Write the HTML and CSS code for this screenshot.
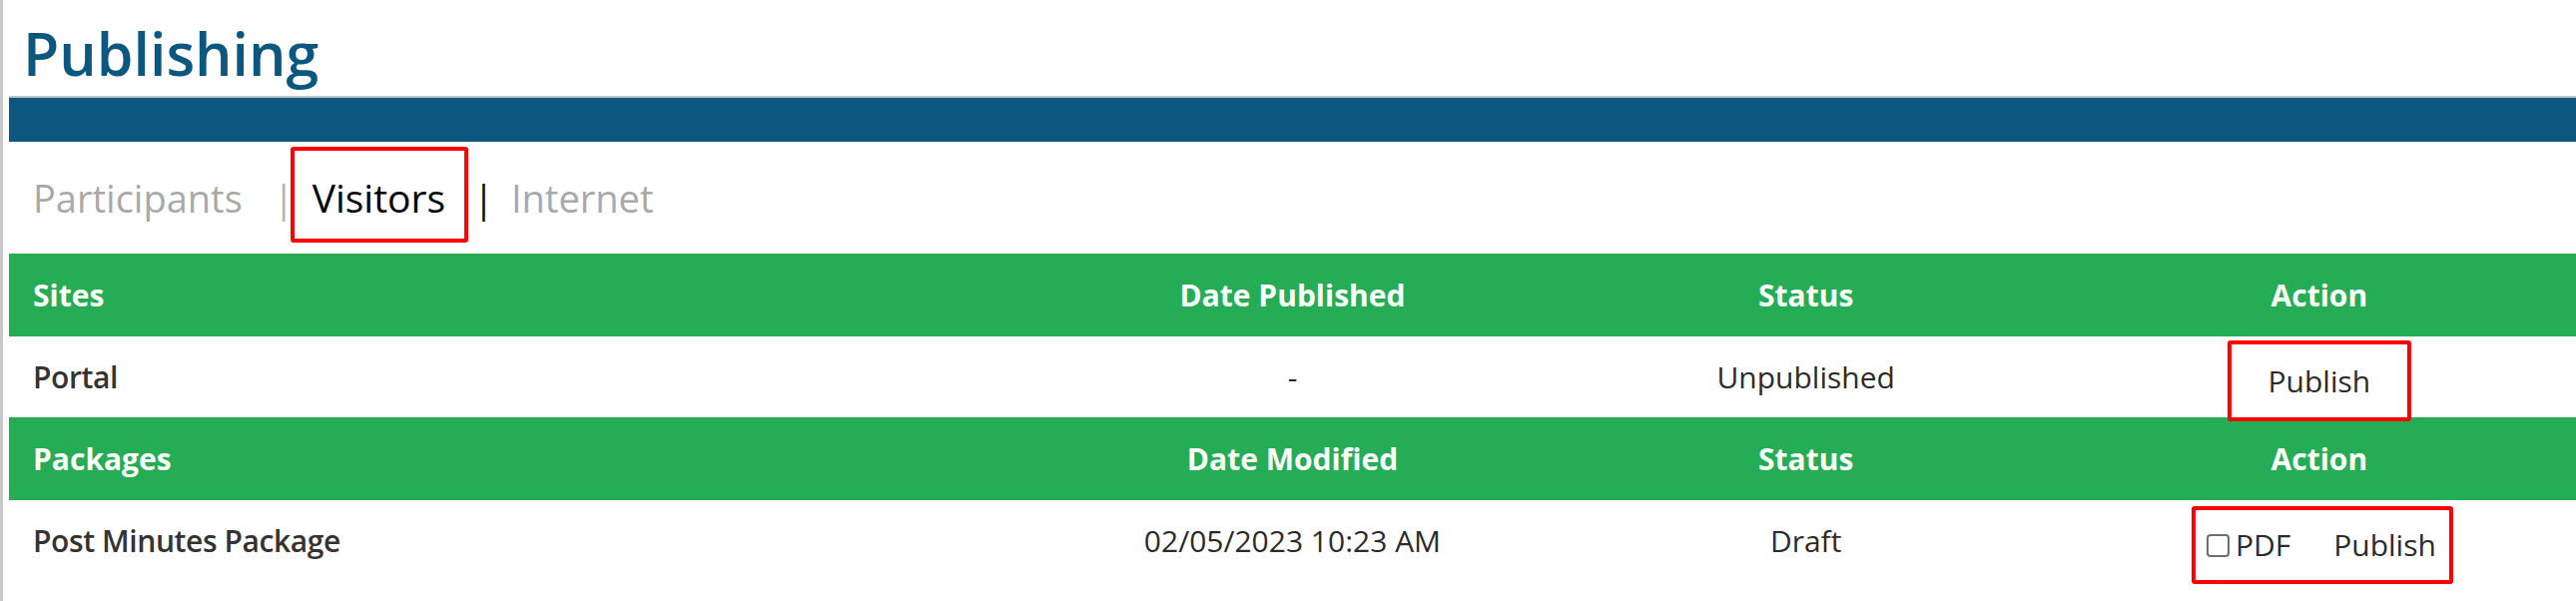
FILE: index.html
```html
<!DOCTYPE html>
<html lang="en">

<head>
    <meta charset="UTF-8">
    <title>Publishing</title>
    <link rel="stylesheet" href="styles.css">
</head>

<body>
    <div class="page">
        <h1 class="page-title">Publishing</h1>
        <div class="banner"></div>

        <nav class="tabs">
            <a class="tab">Participants</a>
            <span class="sep">|</span>
            <span class="mark mark-tab"><a class="tab active">Visitors</a></span>
            <span class="sep sep-dark">|</span>
            <a class="tab">Internet</a>
        </nav>

        <div class="pub-table">
            <div class="head first">Sites</div>
            <div class="head">Date Published</div>
            <div class="head">Status</div>
            <div class="head">Action</div>

            <div class="cell first name">Portal</div>
            <div class="cell">-</div>
            <div class="cell">Unpublished</div>
            <div class="cell">
                <span class="mark mark-site"><a class="link">Publish</a></span>
            </div>

            <div class="head first">Packages</div>
            <div class="head">Date Modified</div>
            <div class="head">Status</div>
            <div class="head">Action</div>

            <div class="cell first name">Post Minutes Package</div>
            <div class="cell">02/05/2023 10:23 AM</div>
            <div class="cell">Draft</div>
            <div class="cell">
                <span class="mark mark-package">
                    <label class="pdf"><input type="checkbox" class="check">PDF</label>
                    <a class="link">Publish</a>
                </span>
            </div>
        </div>
    </div>
</body>

</html>
```

FILE: styles.css
```css
html,
body {
    margin: 0;
    padding: 0;
    background-color: #fff;
}

body {
    font-family: "Open Sans", "Liberation Sans", Arial, sans-serif;
    color: #2b2b2b;
}

.page {
    min-height: 602px;
    border-left: 3px solid #c8c8c8;
    padding-left: 6px;
    box-sizing: border-box;
}

.page-title {
    margin: 0;
    padding: 11px 0 0 14px;
    font-size: 59px;
    font-weight: 600;
    line-height: 85px;
    color: #0b5780;
}

.banner {
    height: 44px;
    border-top: 2px solid #c4c4c4;
    background-color: #0b5780;
}

/* tab strip under the banner */
.tabs {
    display: flex;
    align-items: baseline;
    height: 112px;
    padding: 5px 0 0 24px;
    box-sizing: border-box;
    font-size: 38px;
}

.tab {
    color: #a9a9a9;
    cursor: pointer;
}

.tab.active {
    color: #000;
    font-size: 39px;
}

.sep {
    color: #b5b5b5;
    margin: 0 -4px 0 31px;
}

.sep-dark {
    color: #111;
    margin: 0 17px 0 5px;
}

/* red call-out boxes, drawn above the next row */
.mark {
    position: relative;
    z-index: 1;
    display: inline-flex;
    align-items: center;
    border: 4px solid #f00;
    border-radius: 3px;
}

.mark-tab {
    padding: 20px 19px 15px 18px;
}

.mark-site {
    margin-top: 8px;
    padding: 16px 37px;
}

.mark-package {
    margin: 9px 0 0 6px;
    padding: 14px 13px 15px 11px;
}

/* sites / packages grid */
.pub-table {
    display: grid;
    grid-template-columns: 40% 20% 20% 20%;
    grid-template-rows: 83px 81px 83px 81px;
}

.head,
.cell {
    display: flex;
    align-items: center;
    justify-content: center;
    font-size: 30px;
    white-space: nowrap;
}

.head {
    background-color: #24ad55;
    color: #fff;
    font-weight: 700;
}

.first {
    justify-content: flex-start;
    padding-left: 24px;
}

.name {
    font-weight: 600;
    letter-spacing: -0.4px;
    color: #333;
}

.link {
    color: #2b2b2b;
    cursor: pointer;
}

.pdf {
    display: inline-flex;
    align-items: center;
    margin-right: 43px;
}

.check {
    appearance: none;
    width: 23px;
    height: 23px;
    margin: 2px 6px 0 0;
    border: 2px solid #6e6e6e;
    border-radius: 4px;
    box-sizing: border-box;
}
```
